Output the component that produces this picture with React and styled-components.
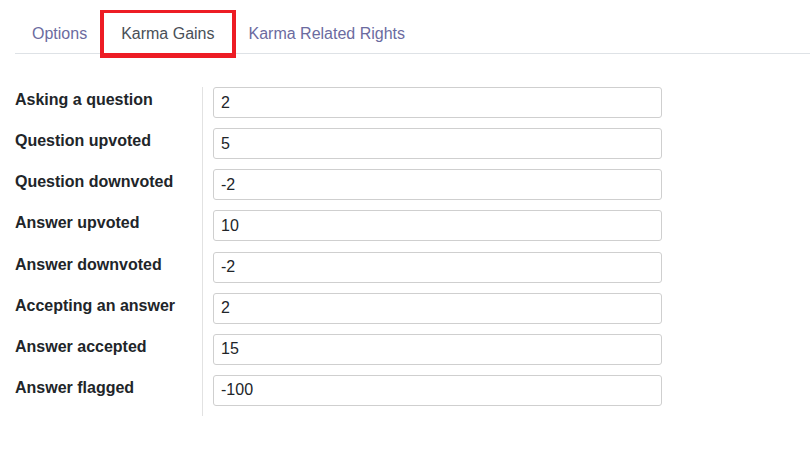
import React from 'react';
import styled, { createGlobalStyle } from "styled-components";

const Global = createGlobalStyle`
  body {
    margin: 0;
    background: #fff;
    font-family: "Liberation Sans", Arial, sans-serif;
  }
`;

const Page = styled.div`
  width: 810px;
`;

const TabBar = styled.ul`
  display: flex;
  list-style: none;
  margin: 0 0 0 15px;
  padding: 13px 0 0 0;
  border-bottom: 1px solid #dee2e6;
`;

const Tab = styled.li`
  padding: 11px 17px 9px;
  font-size: 16px;
  line-height: 20px;
  color: ${p => (p.$active ? "#495057" : "#6b6b9f")};
  box-shadow: ${p => (p.$active ? "0 1px 0 4px #ed1c24" : "none")};
  cursor: pointer;
`;

const Form = styled.div`
  display: grid;
  grid-template-columns: 187px 460px;
  margin: 33px 0 0 15px;
`;

const Label = styled.div`
  font-size: 16px;
  font-weight: bold;
  line-height: 20px;
  padding-top: 3px;
  color: #212529;
`;

const Cell = styled.div`
  border-left: 1px solid #e2e2e2;
  padding: 0 0 10.15px 10px;
`;

const Input = styled.input`
  box-sizing: border-box;
  width: 449px;
  height: 31px;
  border: 1px solid #cfcfcf;
  border-radius: 3px;
  padding: 0 7px;
  font-family: "Liberation Sans", Arial, sans-serif;
  font-size: 16px;
  color: #212529;
  outline: none;
`;

const rows = [
  ["Asking a question", "2"],
  ["Question upvoted", "5"],
  ["Question downvoted", "-2"],
  ["Answer upvoted", "10"],
  ["Answer downvoted", "-2"],
  ["Accepting an answer", "2"],
  ["Answer accepted", "15"],
  ["Answer flagged", "-100"],
];

export default function App() {
  return (
    <Page>
      <Global />
      <TabBar>
        <Tab>Options</Tab>
        <Tab $active>Karma Gains</Tab>
        <Tab>Karma Related Rights</Tab>
      </TabBar>
      <Form>
        {rows.map(([label, value]) => (
          <React.Fragment key={label}>
            <Label>{label}</Label>
            <Cell>
              <Input defaultValue={value} />
            </Cell>
          </React.Fragment>
        ))}
      </Form>
    </Page>
  );
}
